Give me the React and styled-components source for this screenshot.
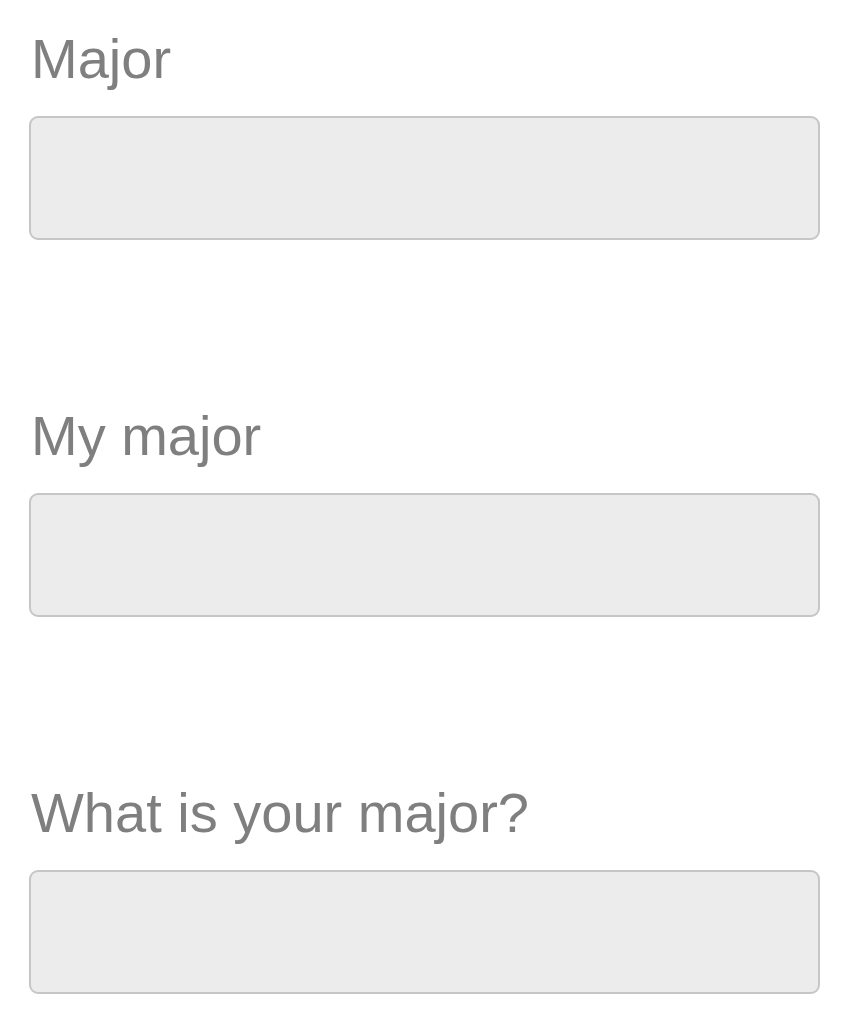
import React from 'react'
import styled, { createGlobalStyle } from 'styled-components'

const GlobalStyle = createGlobalStyle`
    html, body {
        margin: 0;
        padding: 0;
        background: #ffffff;
    }
    body {
        font-family: "Liberation Sans", Arial, Helvetica, sans-serif;
    }
`

const Form = styled.form`
    display: flex;
    flex-direction: column;
    gap: 164px;
    padding: 27px 26px 0 29px;
`

const Field = styled.div`
    display: flex;
    flex-direction: column;
`

const Label = styled.label`
    padding-left: 2px;
    font-size: 56px;
    line-height: 64px;
    color: #7f7f7f;
    margin-bottom: 25px;
`

const Input = styled.input`
    box-sizing: border-box;
    width: 100%;
    height: 124px;
    margin: 0;
    background: #ececec;
    border: 2px solid #c6c6c6;
    border-radius: 9px;
    font-family: inherit;
    font-size: 48px;
    padding: 0 16px;
    color: #555;
    outline: none;
`

const fields = ['Major', 'My major', 'What is your major?']

function App() {
    return (
        <>
            <GlobalStyle />
            <Form onSubmit={e => e.preventDefault()}>
                {fields.map((label, i) => (
                    <Field key={i}>
                        <Label htmlFor={'f' + i}>{label}</Label>
                        <Input id={'f' + i} type="text" />
                    </Field>
                ))}
            </Form>
        </>
    )
}

export default App
